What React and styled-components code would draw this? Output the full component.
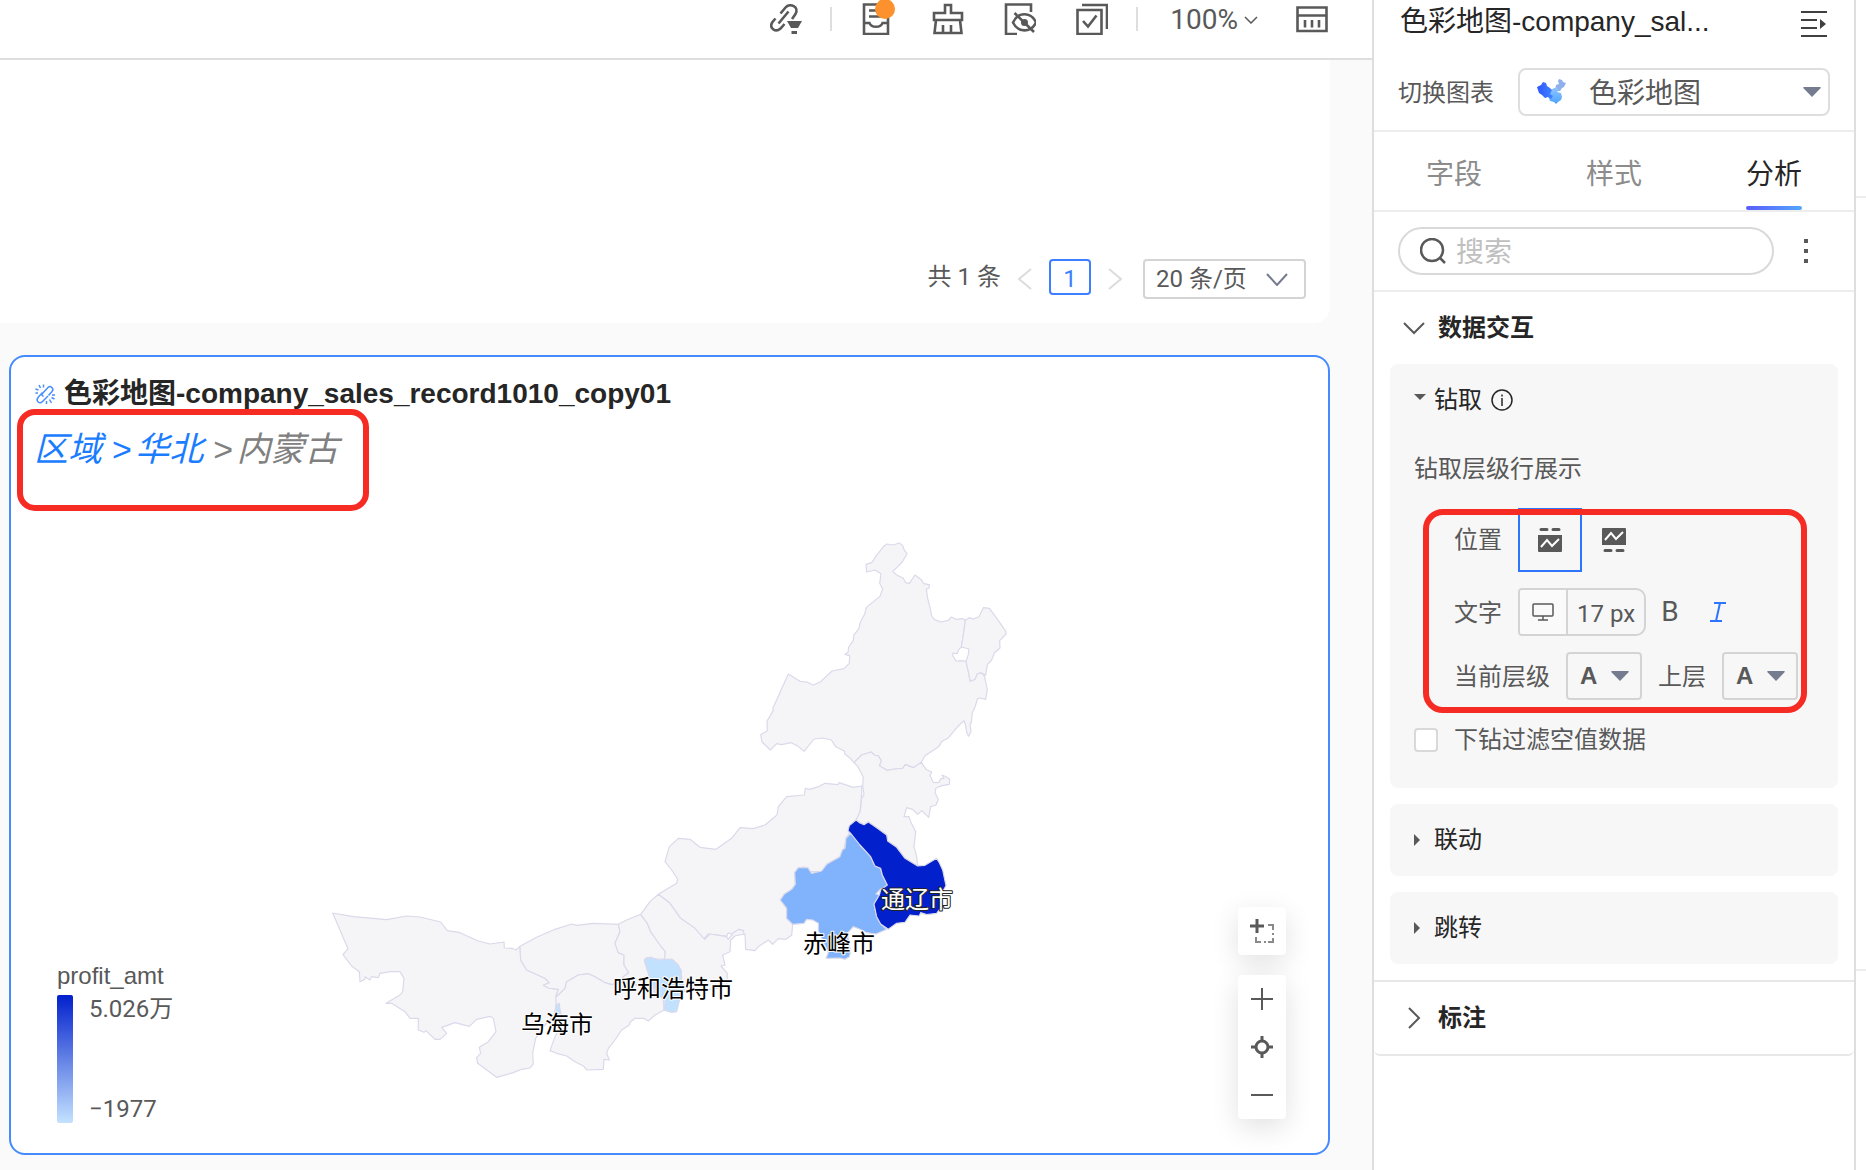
import { useState } from "react";
import styled, { createGlobalStyle } from "styled-components";

const GlobalStyle = createGlobalStyle`
    * {
        box-sizing: border-box;
    }
    body {
        margin: 0;
        background: #fafafa;
        color: #595959;
        font-family: "Liberation Sans", "Noto Sans CJK SC", sans-serif;
        font-size: 24px;
        line-height: 36px;
    }
    button, input, select {
        font: inherit;
        color: inherit;
        background: transparent;
        border: none;
        padding: 0;
        margin: 0;
        outline: none;
    }
    button {
        cursor: pointer;
    }
    svg {
        display: block;
        flex: none;
    }
`
const Page = styled.div`
    display: flex;
    min-height: 100vh;
`
const Main = styled.main`
    flex: 1;
    min-width: 0;
    display: flex;
    flex-direction: column;
`
const Toolbar = styled.header`
    display: flex;
    justify-content: flex-end;
    align-items: flex-start;
    gap: 28px;
    height: 60px;
    padding: 3px 44px 0 0;
    background: #fff;
    border-bottom: 2px solid #dedede;
`
const ToolGroup = styled.div`
    display: flex;
    align-items: center;
    height: 32px;
    gap: ${({ $gap }) => $gap || 40}px;
`
const ToolDivider = styled.span`
    width: 2px;
    height: 24px;
    margin-top: 4px;
    background: #dedede;
`
const ToolButton = styled.button`
    position: relative;
    width: 32px;
    height: 32px;
`
const Dot = styled.span`
    position: absolute;
    top: -4px;
    right: -3px;
    width: 20px;
    height: 20px;
    border-radius: 50%;
    background: #fd912d;
`
const ZoomButton = styled.button`
    display: flex;
    align-items: center;
    gap: 6px;
    padding: 2px 0 0 4px;
    font-family: Roboto, sans-serif;
    font-size: 28px;
`
const TableCard = styled.section`
    display: flex;
    align-items: flex-end;
    justify-content: flex-end;
    min-height: 263px;
    margin-right: 42px;
    padding: 0 24px 24px;
    background: #fff;
    border-radius: 0 0 16px 0;
`
const Pagination = styled.nav`
    display: flex;
    align-items: flex-start;
    font-family: Roboto, "Noto Sans CJK SC", sans-serif;
`
const PageArrow = styled.button`
    display: flex;
    align-items: center;
    justify-content: center;
    width: 48px;
    height: 40px;
`
const PageNumber = styled.button`
    width: 42px;
    height: 36px;
    line-height: 36px;
    color: #3d7fff;
    border: 2px solid #3d7fff;
    border-radius: 4px;
`
const SelectBox = styled.div`
    display: grid;
    align-items: center;
    width: ${({ $width }) => $width}px;
    height: ${({ $height }) => $height || 48}px;
    border: 2px solid ${({ $line }) => $line || "#d4d4d4"};
    border-radius: ${({ $radius }) => $radius || 4}px;
    select, svg {
        grid-area: 1 / 1;
    }
    select {
        appearance: none;
        width: 100%;
        height: 100%;
        padding-left: ${({ $indent }) => $indent}px;
    }
    svg {
        pointer-events: none;
        justify-self: end;
        margin-right: ${({ $inset }) => $inset}px;
    }
    svg.lead {
        justify-self: start;
        margin-left: 16px;
    }
`
const PageSize = styled(SelectBox)`
    margin-left: 4px;
`
const ChartCard = styled.section`
    margin: 32px 42px 15px 9px;
    background: #fff;
    border: 2px solid #458bff;
    border-radius: 16px;
`
const ChartTitle = styled.h2`
    display: flex;
    align-items: center;
    gap: 8px;
    height: 52px;
    margin: 0;
    padding: 22px 24px 0 23px;
    font-size: 28px;
    font-weight: 700;
    color: #262626;
`
const DrillPath = styled.nav`
    width: fit-content;
    margin-left: 6px;
    padding: 10px 24px 32px 11px;
    border: 6px solid #f52b24;
    border-radius: 18px;
    font-size: 34px;
    line-height: 48px;
    font-style: italic;
    color: #808080;
    a {
        color: #1a7cff;
        text-decoration: none;
    }
    span {
        margin-right: 4px;
    }
`
const MapCanvas = styled.div`
    position: relative;
    > svg {
        width: 100%;
        height: auto;
    }
`
const Legend = styled.div`
    position: absolute;
    left: 46px;
    bottom: 30px;
`
const LegendName = styled.div`
    padding-bottom: 1px;
`
const LegendScale = styled.div`
    display: flex;
    justify-content: space-between;
    gap: 16px;
    height: 128px;
    font-family: Roboto, "Noto Sans CJK SC", sans-serif;
`
const LegendBar = styled.div`
    width: 16px;
    border-radius: 2px;
    background: linear-gradient(#0220cc, #c4e2ff);
`
const LegendValues = styled.div`
    flex: 1;
    display: flex;
    flex-direction: column;
    justify-content: space-between;
    line-height: 28px;
`
const MapTools = styled.div`
    position: absolute;
    right: 42px;
    bottom: 34px;
    display: flex;
    flex-direction: column;
    gap: 20px;
`
const MapToolGroup = styled.div`
    display: flex;
    flex-direction: column;
    border-radius: 4px;
    background: #fff;
    box-shadow: 0 8px 28px rgba(0, 0, 0, 0.12);
`
const MapToolButton = styled.button`
    display: flex;
    align-items: center;
    justify-content: center;
    width: 48px;
    height: 48px;
`
const Panel = styled.aside`
    flex: none;
    width: 484px;
    background: #fff;
    border: solid #dedede;
    border-width: 0 2px;
`
const PanelTitle = styled.div`
    display: flex;
    align-items: center;
    justify-content: space-between;
    height: 44px;
    padding: 0 27px 0 26px;
    font-size: 28px;
    color: #262626;
    button {
        padding-top: 4px;
        color: #404040;
    }
`
const ChartSwitch = styled.div`
    display: flex;
    align-items: center;
    justify-content: space-between;
    height: 88px;
    padding: 10px 24px 0;
    border-bottom: 2px solid #ededed;
    label {
        padding-top: 2px;
    }
    select {
        font-size: 28px;
        padding-top: 3px;
    }
`
const Tabs = styled.div`
    display: grid;
    grid-template-columns: repeat(3, 1fr);
    justify-items: center;
    height: 80px;
    border-bottom: 2px solid #ededed;
`
const Tab = styled.button`
    position: relative;
    font-size: 28px;
    padding-top: 8px;
    color: ${({ $active }) => ($active ? "#262626" : "#8c8c8c")};
    &::after {
        content: "";
        display: ${({ $active }) => ($active ? "block" : "none")};
        position: absolute;
        left: 0;
        right: 0;
        bottom: 0;
        height: 4px;
        border-radius: 2px;
        background: linear-gradient(90deg, #5b5cfb, #55a5ff);
    }
`
const SearchRow = styled.div`
    display: flex;
    align-items: center;
    gap: 20px;
    height: 80px;
    padding: 0 36px 0 24px;
    border-bottom: 2px solid #ededed;
`
const SearchBox = styled.label`
    flex: 1;
    min-width: 0;
    display: flex;
    align-items: center;
    gap: 10px;
    height: 48px;
    padding: 0 20px;
    border: 2px solid #d9d9d9;
    border-radius: 24px;
    input {
        flex: 1;
        min-width: 0;
        padding-top: 3px;
        font-size: 28px;
    }
    input::placeholder {
        color: #bfbfbf;
        opacity: 1;
    }
`
const MoreButton = styled.button`
    flex: none;
    width: 24px;
    height: 24px;
`
const SectionHead = styled.button`
    display: flex;
    align-items: center;
    gap: 10px;
    width: 100%;
    height: 72px;
    padding: 0 26px;
    font-weight: 700;
    color: #262626;
`
const Groups = styled.div`
    display: flex;
    flex-direction: column;
    gap: 16px;
    padding: 0 16px 16px;
`
const Group = styled.section`
    background: #f7f7f7;
    border-radius: 8px;
    padding: 0 24px;
`
const GroupHead = styled.button`
    display: flex;
    align-items: center;
    gap: 8px;
    height: 72px;
    color: #262626;
`
const GroupNote = styled.p`
    margin: 0;
    padding-top: 1px;
    height: 64px;
    line-height: 64px;
`
const DrillForm = styled.div`
    position: relative;
    display: flex;
    flex-direction: column;
    gap: 16px;
    margin: 8px 0 0 40px;
    &::after {
        content: "";
        position: absolute;
        top: 1px;
        right: 7px;
        bottom: -13px;
        left: -31px;
        border: 6px solid #f52b24;
        border-radius: 20px;
        pointer-events: none;
    }
`
const FormRow = styled.div`
    display: flex;
    align-items: center;
    gap: 16px;
    white-space: nowrap;
    label {
        padding-top: 2px;
    }
    select {
        font-weight: 700;
    }
`
const Choices = styled.div`
    display: flex;
`
const PositionButton = styled.button`
    display: flex;
    align-items: center;
    justify-content: center;
    width: 64px;
    height: 64px;
    border: 2px solid ${({ $active }) => ($active ? "#2f74ff" : "transparent")};
`
const SizeBox = styled.div`
    display: flex;
    width: 128px;
    height: 48px;
    border: 2px solid #d4d4d4;
    border-radius: 4px 10px 10px 4px;
    overflow: hidden;
    input {
        min-width: 0;
        flex: 1;
        padding: 3px 0 0 9px;
        font-family: Roboto, sans-serif;
    }
`
const DeviceButton = styled.button`
    display: flex;
    align-items: center;
    justify-content: center;
    width: 48px;
    background: #fafafa;
    border-right: 2px solid #d4d4d4;
`
const StyleButtons = styled.div`
    display: flex;
    gap: 16px;
    margin-left: -8px;
`
const StyleButton = styled.button`
    display: flex;
    align-items: center;
    justify-content: center;
    width: 32px;
    height: 48px;
    font-family: Roboto, sans-serif;
    font-size: 28px;
    color: ${({ $active }) => ($active ? "#2f74ff" : "#595959")};
`
const CheckRow = styled.label`
    display: flex;
    align-items: center;
    gap: 16px;
    height: 24px;
    margin: 28px 0 36px;
    input {
        appearance: none;
        width: 24px;
        height: 24px;
        background: #fff;
        border: 2px solid #d9d9d9;
        border-radius: 4px;
    }
`
const MarkSection = styled.section`
    height: 76px;
    border: solid #e8e8e8;
    border-width: 2px 0;
    border-radius: 0 0 6px 6px;
`
const NextPanel = styled.div`
    flex: none;
    width: 10px;
    background: #fff;
    div {
        border-bottom: 2px solid #ededed;
    }
    div:first-child {
        height: 198px;
    }
    div:last-child {
        height: 773px;
    }
`

const Icon = ({ w = 32, h = w, box, sw = 2, children, ...rest }) => (
    <svg width={w} height={h} viewBox={box || `0 0 ${w} ${h}`} fill="none" stroke="currentColor" strokeWidth={sw} aria-hidden="true" {...rest}>
        {children}
    </svg>
)

const Chevron = ({ w, h, d, color, ...rest }) => (
    <Icon w={w} h={h} stroke={color || "currentColor"} {...rest}>
        <path d={d} />
    </Icon>
)

const Triangle = ({ w = 18, h = 10, color = "#767c8f" }) => (
    <Icon w={w} h={h} box="0 0 18 10" stroke="none">
        <path d="M1 0H17Q18.500 .5 17.300 1.500L9 10L.7 1.500Q-.5 .5 1 0Z" fill={color} />
    </Icon>
)

const LinkIcon = () => (
    <Icon sw={2.600}>
        <path d="M5.500 15.500 2.500 19C-1.500 25 5.500 30 10.500 25.500L14.500 21" />
        <path d="M10.500 10.500 15.500 4.500C20-.5 29.500 3.500 25.500 11L22 16" />
        <path d="M8.500 20.500 18.500 8.500" />
        <path d="M17 18H32L28 25H21ZM21.500 28H27V31H21.500Z" fill="currentColor" stroke="none" />
    </Icon>
)

const InboxIcon = () => (
    <Icon sw={2.600}>
        <path d="M4 1.500H28V31H4ZM9 7.500H22M9 13.500H22M4 20H9.500C11 25 21 25 22.500 20H28" />
    </Icon>
)

const BrushIcon = () => (
    <Icon sw={2.600}>
        <path d="M13 10V2H19V10H30V17H2V10H13ZM4 17 2.500 30H29.500L28 17M11 22V30M19 22V30" />
    </Icon>
)

const HiddenIcon = () => (
    <Icon sw={2.600}>
        <path d="M27 9V1.500H2V31H13" />
        <path d="M9 19.500C14 8.500 27 8.500 32 19.500C27 30 14 30 9 19.500ZM10.500 10 30 29" />
        <circle cx="20.500" cy="19.500" r="3.500" fill="currentColor" stroke="none" />
    </Icon>
)

const SelectAllIcon = () => (
    <Icon sw={2.600}>
        <path d="M1.500 7H25.500V31H1.500ZM6 2H31V26M7 18 12 23.500 20.500 12.500" />
    </Icon>
)

const GridIcon = () => (
    <Icon sw={2.600}>
        <path d="M1.500 4.500H30.500V28H1.500ZM1.500 12.500H30.500M9 17V24.500M16 17V24.500M23 17V24.500" />
    </Icon>
)

const UnlinkIcon = () => (
    <Icon w={22} h={22} sw={1.500} stroke="#4a8dff">
        <path d="M9.500 13.500 7.500 11.500 14 4.500C16.500 2 20.500 5.500 18 8.500L14.500 12.500M8.500 9.500 4 14.500C1.500 18 5.500 21.500 8.500 18.500L14 13" />
        <path d="M5 2 6.500 5M9.500 1.500V4.500M1.500 6 4.500 7M1.500 10H4M12.500 18V21M15.500 16.500 17.500 20M17.500 14.500 20.500 16M18 12H21" />
    </Icon>
)

const ChinaIcon = () => (
    <Icon w={30} h={26} stroke="none" className="lead">
        <defs>
            <linearGradient id="china-west" x1="0" x2="1">
                <stop offset="0" stopColor="#2f55ff" />
                <stop offset="1" stopColor="#3f86ff" />
            </linearGradient>
            <linearGradient id="china-east" x1="0" x2="0" y1="0" y2="1">
                <stop offset="0" stopColor="#8fc3ff" />
                <stop offset="1" stopColor="#4ba3ff" />
            </linearGradient>
        </defs>
        <path d="M20 6 23 5 22 2 23 0 26 1 27 3 30 4 28 8 26 9 24 12 19 12Z" fill="#8fb0ea" />
        <path d="M11 11 15 11 18 9 21 9 23 11 21 13 25 14 26 18 25 21 22 23 20 25 18 23 14 22 13 19 10 16Z" fill="url(#china-east)" />
        <path d="M1 8 5 6 7 3 10 4 11 7 14 9 16 11 14 15 17 17 15 20 12 18 9 19 6 16 3 14Z" fill="url(#china-west)" />
    </Icon>
)

const CollapseIcon = () => (
    <Icon w={26} h={26}>
        <path d="M0 1H26M0 9H16M0 17H16M0 25H26" />
        <path d="M19 8 25 13 19 18Z" fill="currentColor" stroke="none" />
    </Icon>
)

const ChartPosIcon = ({ flip }) => (
    <Icon w={24} h={24} sw={3}>
        <path d={flip ? "M3 22.500H9M15 22.500H21" : "M3 1.500H9M15 1.500H21"} strokeLinecap="round" />
        <path d={flip ? "M0 1Q0 0 1 0H23Q24 0 24 1V17H0Z" : "M0 7H24V23Q24 24 23 24H1Q0 24 0 23Z"} fill="currentColor" stroke="none" />
        <path d={flip ? "M3 12 9 5 14 11 21 4" : "M3 19 9 12 14 18 21 11"} stroke="#fff" strokeWidth="2" />
    </Icon>
)

// all outlines share one grid, three units to a pixel
const regions = [
    { name: "呼伦贝尔市", at: [1290, 0], d: "M378 133L395 128L412 103L433 77L441 72L460 75L478 69L488 77L492 89L501 101L487 126L458 155L472 166L490 175L497 188L508 190L525 165L545 180L551 191L568 194L567 204L559 208L563 235L570 262L575 288L584 299L603 306L625 301L634 291L648 298L668 296L676 301L670 345L664 381L656 389L652 401L638 399L639 408L648 423L666 422L678 424L685 455L691 484L705 478L711 462L723 458L733 468L737 484L742 510L737 538L720 534L712 537L706 558L697 578L694 607L690 613L693 635L686 649L681 640L676 612L672 602L655 618L625 654L606 664L596 680L555 707L544 727L520 743L496 734L488 745L465 747L441 751L418 737L424 722L414 707L405 706L393 696L365 705L342 728L329 713L315 703L313 693L287 680L274 660L248 654L222 657L192 694L172 677L153 668L125 674L110 671L91 690L66 666L62 644L82 632L81 603L100 571L98 566L145 462L180 484L200 486L220 495L242 485L276 453L312 446L328 430L329 407L315 403L324 397L326 381L340 362L341 346L357 325L360 309L374 282L379 262L420 229L428 207L419 190L423 161L405 150L380 156Z" },
    { name: "莫力达瓦", at: [1290, 0], d: "M676 301L688 293L700 297L717 290L730 263L748 265L775 302L798 335L798 342L779 362L780 384L763 399L755 420L742 434L737 466L723 458L711 462L705 478L691 484L685 455L678 424L684 407L687 387L664 381L670 345Z" },
    { name: "兴安盟", at: [1290, 0], d: "M342 728L354 740L370 772L368 797L372 822L364 838L361 873L348 900L372 914L385 906L410 923L440 945L443 963L470 982L495 1015L533 1038L530 1010L522 980L527 935L512 905L507 890L492 890L500 863L518 868L533 883L545 872L566 892L572 860L588 855L595 838L585 818L588 804L606 797L628 793L629 778L618 770L606 765L612 775L603 776L596 788L580 787L570 767L575 756L558 748L544 727L520 743L496 734L488 745L465 747L441 751L418 737L424 722L414 707L405 706L393 696L365 705Z" },
    { name: "锡林郭勒盟", at: [990, 720], d: "M665 78L640 82L597 68L594 74L555 70L535 80L510 88L496 85L493 105L440 110L415 140L411 165L375 195L340 206L300 203L275 235L228 268L180 262L150 238L115 235L88 260L75 305L95 330L113 357L110 370L55 403L90 430L120 473L165 510L190 538L205 522L260 528L265 518L280 525L297 508L302 520L315 523L317 568L345 572L355 560L385 540L398 553L415 536L437 538L455 526L458 493L440 475L440 445L421 420L455 388L466 373L464 337L490 320L510 335L545 335L560 313L600 290L607 270L613 265L618 235L628 220L626 207L648 180L660 155L665 100Z" },
    { name: "阿拉善盟", at: [0, 1020], d: "M68 159L130 170L230 179L290 168L330 171L392 186L412 212L450 218L505 243L540 252L582 246L583 264L606 265L618 270L630 259L632 300L650 330L705 355L718 368L700 376L715 384L745 388L738 408L740 425L738 440L730 470L705 495L677 535L668 580L670 612L660 624L635 628L610 638L560 652L503 610L500 592L512 580L508 562L535 545L558 515L550 475L540 469L500 478L478 499L435 488L395 502L410 520L390 538L375 538L348 512L342 517L325 510L325 475L300 475L285 455L245 430L228 430L270 405L278 395L282 355L270 335L240 335L210 340L205 353L185 350L180 360L165 350L165 358L150 365L148 335L125 318L99 284L114 266Z" },
    { name: "巴彦淖尔市", at: [0, 1020], d: "M630 259L680 232L735 208L785 192L800 196L850 190L925 193L930 215L915 250L925 278L942 285L942 315L956 338L940 350L928 368L905 374L885 368L855 350L835 341L805 345L770 365L765 385L745 405L738 408L745 388L715 384L700 376L718 368L705 355L650 330L632 300Z" },
    { name: "鄂尔多斯市", at: [0, 1020], d: "M745 405L765 385L770 365L805 345L835 341L855 350L885 368L905 374L928 368L960 370L1000 380L1045 400L1060 420L1062 450L1045 460L1035 465L1015 483L1000 475L975 475L960 487L958 495L935 510L915 540L895 565L890 580L898 600L882 598L880 628L830 630L820 618L795 605L770 588L740 580L720 572L735 530L750 500L750 460L738 440L738 410Z" },
    { name: "包头市", at: [0, 1020], d: "M925 193L950 180L992 163L1012 190L1022 215L1050 255L1066 275L1064 297L1045 297L1010 293L1003 300L1012 330L1030 385L1040 400L1000 380L960 370L928 368L940 350L956 338L942 315L942 285L925 278L915 250L930 215Z" },
    { name: "乌兰察布市", at: [0, 1020], d: "M992 163L1020 125L1045 103L1080 130L1110 173L1155 205L1184 238L1200 222L1250 230L1255 238L1270 218L1287 208L1300 212L1302 222L1275 228L1262 240L1260 275L1238 285L1245 315L1233 318L1252 340L1250 380L1190 390L1120 395L1110 400L1115 350L1113 330L1090 300L1064 297L1066 275L1050 255L1022 215L1012 190Z" },
    { name: "呼和浩特市", at: [0, 1020], fill: "#c2e1ff", d: "M1003 300L1020 291L1045 300L1085 297L1105 315L1115 335L1113 355L1125 385L1110 415L1100 455L1085 457L1062 450L1065 425L1045 400L1025 370L1012 330Z" },
    { name: "乌海市", at: [0, 1020], fill: "#c2e1ff", d: "M739 434L748 430L750 450L756 475L744 485L738 458Z" },
    { name: "赤峰市", at: [990, 720], fill: "#80b3fb", d: "M632 220L648 235L660 255L692 290L705 318L722 325L727 345L742 375L735 388L722 387L708 402L718 405L702 432L710 470L722 492L740 508L708 522L680 518L660 508L640 500L622 520L632 575L628 590L615 598L600 594L558 595L565 578L550 545L535 512L535 490L518 480L500 478L492 490L458 493L440 475L440 445L421 420L432 403L455 388L466 373L464 337L475 323L503 322L515 340L545 333L560 313L600 290L607 270L615 265L618 235Z" },
    { name: "通辽市", at: [990, 720], fill: "#0220cc", d: "M648 180L658 188L672 194L685 186L710 203L740 225L743 243L770 262L795 295L833 318L855 316L890 295L898 308L908 330L918 377L905 400L908 435L890 460L860 464L842 458L838 468L810 465L795 487L770 490L745 508L722 492L710 470L702 432L718 405L722 390L742 375L727 345L722 325L705 318L692 290L660 255L632 220L624 212L628 197Z" },
]

const cityLabels = [
    { text: "通辽市", x: 917, y: 908, light: true },
    { text: "赤峰市", x: 839, y: 952 },
    { text: "呼和浩特市", x: 673, y: 997 },
    { text: "乌海市", x: 557, y: 1033 },
]

const RegionMap = () => (
    <svg viewBox="11 511 1317 642" role="img" aria-label="profit_amt">
        <g transform="translate(310 520) scale(.33333)">
            {regions.map(({ name, at, fill, d }) => (
                <path key={name} d={d} transform={`translate(${at[0]} ${at[1]})`} fill={fill || "#f5f5f8"} stroke="#d9d9ea" strokeWidth="3.500" strokeLinejoin="round" />
            ))}
        </g>
        <g fontSize="24" textAnchor="middle" strokeWidth="2" strokeLinejoin="round" paintOrder="stroke">
            {cityLabels.map(({ text, x, y, light }) => (
                <text key={text} x={x} y={y} fill={light ? "#fff" : "#000"} stroke={light ? "#222" : "#fff"}>{text}</text>
            ))}
        </g>
    </svg>
)

const tabs = ["字段", "样式", "分析"]

const App = () => {
    const [tab, setTab] = useState("分析");
    const [position, setPosition] = useState("top");
    const [italic, setItalic] = useState(true);
    const [bold, setBold] = useState(false);

    return (
        <Page>
            <GlobalStyle />
            <Main>
                <Toolbar>
                    <ToolGroup>
                        <ToolButton aria-label="link"><LinkIcon /></ToolButton>
                    </ToolGroup>
                    <ToolDivider />
                    <ToolGroup>
                        <ToolButton aria-label="inbox"><InboxIcon /><Dot /></ToolButton>
                        <ToolButton aria-label="clean"><BrushIcon /></ToolButton>
                        <ToolButton aria-label="hidden"><HiddenIcon /></ToolButton>
                        <ToolButton aria-label="select all"><SelectAllIcon /></ToolButton>
                    </ToolGroup>
                    <ToolDivider />
                    <ToolGroup $gap={38}>
                        <ZoomButton>
                            100%
                            <Chevron w={14} h={8} d="M1 1 7 7 13 1" sw={1.500} />
                        </ZoomButton>
                        <ToolButton aria-label="grid"><GridIcon /></ToolButton>
                    </ToolGroup>
                </Toolbar>

                <TableCard>
                    <Pagination>
                        <span>共 1 条</span>
                        <PageArrow aria-label="prev"><Chevron w={14} h={22} d="M13 1 1 11 13 21" color="#dcdcdc" /></PageArrow>
                        <PageNumber>1</PageNumber>
                        <PageArrow aria-label="next"><Chevron w={14} h={22} d="M1 1 13 11 1 21" color="#dcdcdc" /></PageArrow>
                        <PageSize $width={163} $height={40} $indent={11} $inset={16}>
                            <select aria-label="page size">
                                <option>20 条/页</option>
                            </select>
                            <Chevron w={22} h={13} d="M1 1 11 12 21 1" color="#767c8f" />
                        </PageSize>
                    </Pagination>
                </TableCard>

                <ChartCard>
                    <ChartTitle>
                        <UnlinkIcon />
                        色彩地图-company_sales_record1010_copy01
                    </ChartTitle>
                    <DrillPath>
                        <a href="#area">区域 <span>&gt;</span></a>
                        <a href="#north">华北 </a>
                        <span>&gt;</span>内蒙古
                    </DrillPath>
                    <MapCanvas>
                        <RegionMap />
                        <Legend>
                            <LegendName>profit_amt</LegendName>
                            <LegendScale>
                                <LegendBar />
                                <LegendValues>
                                    <span>5.026万</span>
                                    <span>−1977</span>
                                </LegendValues>
                            </LegendScale>
                        </Legend>
                        <MapTools>
                            <MapToolGroup>
                                <MapToolButton aria-label="box select">
                                    <Icon w={24} h={24}>
                                        <path d="M7 0V14M0 7H14" strokeWidth="3" />
                                        <path d="M18 6H23V11M23 19V23H18M11 23H6V18M23 14V16M14 23H16" stroke="#8a8a8a" />
                                    </Icon>
                                </MapToolButton>
                            </MapToolGroup>
                            <MapToolGroup>
                                <MapToolButton aria-label="zoom in"><Icon w={22} h={22}><path d="M11 0V22M0 11H22" /></Icon></MapToolButton>
                                <MapToolButton aria-label="locate">
                                    <Icon w={22} h={22} sw={3}>
                                        <circle cx="11" cy="11" r="6" />
                                        <path d="M11 0V5M11 17V22M0 11H5M17 11H22" />
                                    </Icon>
                                </MapToolButton>
                                <MapToolButton aria-label="zoom out"><Icon w={22} h={22}><path d="M0 11H22" /></Icon></MapToolButton>
                            </MapToolGroup>
                        </MapTools>
                    </MapCanvas>
                </ChartCard>
            </Main>

            <Panel>
                <PanelTitle>
                    <span>色彩地图-company_sal...</span>
                    <button aria-label="collapse"><CollapseIcon /></button>
                </PanelTitle>
                <ChartSwitch>
                    <label htmlFor="chart-type">切换图表</label>
                    <SelectBox $width={312} $indent={69} $inset={7} $radius={8} $line="#dedede">
                        <select id="chart-type">
                            <option>色彩地图</option>
                        </select>
                        <ChinaIcon />
                        <Triangle />
                    </SelectBox>
                </ChartSwitch>
                <Tabs>
                    {tabs.map(name => (
                        <Tab key={name} $active={name === tab} onClick={() => setTab(name)}>{name}</Tab>
                    ))}
                </Tabs>
                <SearchRow>
                    <SearchBox>
                        <Icon w={26} h={26} sw={2.500}>
                            <circle cx="12" cy="12" r="11" />
                            <path d="M20 20 25 25" />
                        </Icon>
                        <input placeholder="搜索" aria-label="搜索" />
                    </SearchBox>
                    <MoreButton aria-label="more">
                        <Icon w={24} h={24} stroke="none">
                            <path d="M10 0H14V4H10ZM10 10H14V14H10ZM10 20H14V24H10Z" fill="currentColor" />
                        </Icon>
                    </MoreButton>
                </SearchRow>

                <SectionHead>
                    <Chevron w={28} h={28} d="M4 9 14 19 24 9" color="#595959" />
                    数据交互
                </SectionHead>
                <Groups>
                    <Group>
                        <GroupHead>
                            <Icon w={12} h={12} stroke="none"><path d="M0 0H12L6 6Z" fill="#595959" /></Icon>
                            钻取
                            <Icon w={24} h={24} sw={1.500}>
                                <circle cx="12" cy="12" r="10" />
                                <path d="M12 10V18M12 6.500V8.500" />
                            </Icon>
                        </GroupHead>
                        <GroupNote>钻取层级行展示</GroupNote>
                        <DrillForm>
                            <FormRow>
                                <span>位置</span>
                                <Choices>
                                    <PositionButton aria-label="top" $active={position === "top"} onClick={() => setPosition("top")}>
                                        <ChartPosIcon />
                                    </PositionButton>
                                    <PositionButton aria-label="bottom" $active={position === "bottom"} onClick={() => setPosition("bottom")}>
                                        <ChartPosIcon flip />
                                    </PositionButton>
                                </Choices>
                            </FormRow>
                            <FormRow>
                                <label htmlFor="font-size">文字</label>
                                <SizeBox>
                                    <DeviceButton aria-label="device">
                                        <Icon w={22} h={18} sw={1.500}>
                                            <rect x="1" y="1" width="20" height="12" rx="1" />
                                            <path d="M11 13V17M6 17H16" />
                                        </Icon>
                                    </DeviceButton>
                                    <input id="font-size" defaultValue="17 px" />
                                </SizeBox>
                                <StyleButtons>
                                    <StyleButton $active={bold} onClick={() => setBold(!bold)}>B</StyleButton>
                                    <StyleButton $active={italic} onClick={() => setItalic(!italic)} aria-label="italic">
                                        <Icon w={16} h={20}><path d="M4 1H16M0 19H12M10 1 6 19" /></Icon>
                                    </StyleButton>
                                </StyleButtons>
                            </FormRow>
                            <FormRow>
                                <label htmlFor="current-level">当前层级</label>
                                <SelectBox $width={76} $indent={12} $inset={11}>
                                    <select id="current-level"><option>A</option></select>
                                    <Triangle />
                                </SelectBox>
                                <label htmlFor="upper-level">上层</label>
                                <SelectBox $width={76} $indent={12} $inset={11}>
                                    <select id="upper-level"><option>A</option></select>
                                    <Triangle />
                                </SelectBox>
                            </FormRow>
                        </DrillForm>
                        <CheckRow>
                            <input type="checkbox" />
                            下钻过滤空值数据
                        </CheckRow>
                    </Group>
                    {["联动", "跳转"].map(name => (
                        <Group key={name}>
                            <GroupHead>
                                <Icon w={12} h={12} stroke="none"><path d="M0 0 6 6 0 12Z" fill="#595959" /></Icon>
                                {name}
                            </GroupHead>
                        </Group>
                    ))}
                </Groups>
                <MarkSection>
                    <SectionHead>
                        <Chevron w={28} h={28} d="M9 4 19 14 9 24" color="#595959" />
                        标注
                    </SectionHead>
                </MarkSection>
            </Panel>
            <NextPanel>
                <div />
                <div />
            </NextPanel>
        </Page>
    )
}

export default App
